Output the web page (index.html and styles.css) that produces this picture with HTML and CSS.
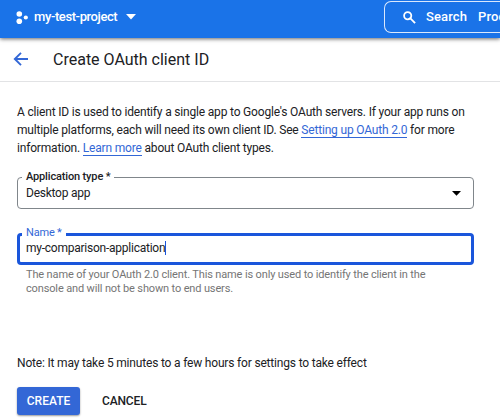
FILE: index.html
```html
<!DOCTYPE html>
<html lang="en">
<head>
<meta charset="utf-8">
<title>Create OAuth client ID</title>
<link rel="stylesheet" href="styles.css">
</head>
<body>
<header class="topbar">
  <div class="project">
    <svg class="project-icon" width="12" height="13" viewBox="0 0 12 13"><circle cx="3.3" cy="3" r="2.8"/><circle cx="3.3" cy="10.2" r="2.8"/><circle cx="9.8" cy="6.5" r="2.1"/></svg>
    <span class="project-name">my-test-project</span>
    <svg class="caret" width="10" height="6" viewBox="0 0 10 6"><path d="M0 0h10L5 5.6z"/></svg>
  </div>
  <div class="search">
    <svg class="search-icon" width="13" height="13" viewBox="0 0 13 13"><circle cx="4.7" cy="4.7" r="3.6"/><path d="M7.4 7.4l4.7 4.7"/></svg>
    <span class="search-label">Search</span>
    <span class="search-hint">Prod</span>
  </div>
</header>
<div class="titlebar">
  <svg class="back" width="15" height="14" viewBox="0 0 15 14"><path d="M15 7H2M8 .8L1.8 7 8 13.2"/></svg>
  <h1 class="title">Create OAuth client ID</h1>
</div>
<main class="content">
  <p class="intro">A client ID is used to identify a single app to Google's OAuth servers. If your app runs on<br>multiple platforms, each will need its own client ID. See <a class="link">Setting up OAuth 2.0</a> for more<br>information. <a class="link">Learn more</a> about OAuth client types.</p>
  <fieldset class="field">
    <legend class="legend type-label">Application type *</legend>
    <span class="type-value">Desktop app</span>
    <svg class="select-caret" width="9" height="5" viewBox="0 0 9 5"><path d="M0 0h9L4.5 4.8z"/></svg>
  </fieldset>
  <fieldset class="field focused">
    <legend class="legend name-label">Name *</legend>
    <span class="name-value">my-comparison-application</span><span class="cursor"></span>
  </fieldset>
  <p class="help">The name of your OAuth 2.0 client. This name is only used to identify the client in the<br>console and will not be shown to end users.</p>
  <p class="note">Note: It may take 5 minutes to a few hours for settings to take effect</p>
  <div class="actions">
    <button class="create">CREATE</button>
    <button class="cancel">CANCEL</button>
  </div>
</main>
</body>
</html>
```
FILE: styles.css
```css
* { box-sizing: border-box; }
body {
  margin: 0;
  height: 420px;
  overflow: hidden;
  background: #fff;
  color: #202124;
  font: 12px/18px Roboto, "Liberation Sans", sans-serif;
}
svg { display: block; flex: none; }
.topbar {
  position: relative;
  display: flex;
  justify-content: space-between;
  height: 38px;
  padding-left: 16px;
  background: #1a73e8;
  box-shadow: 0 1px 4px rgba(0,0,0,.6);
  color: #fff;
  white-space: nowrap;
}
.project { display: flex; align-items: center; height: 34px; }
.project-icon, .caret { fill: #fff; }
.project-name { margin: 0 9px 0 6px; font-size: 13px; font-weight: 500; letter-spacing: -.4px; }
.search {
  display: flex;
  align-items: center;
  width: 116px;
  height: 32px;
  margin-top: 1px;
  padding-left: 18px;
  overflow: hidden;
  border: 1px solid #dbe8fc;
  border-right: 0;
  border-radius: 7px 0 0 7px;
  font-size: 13px;
  font-weight: 500;
  letter-spacing: .12px;
}
.search-icon { fill: none; stroke: #fff; stroke-width: 1.8; }
.search-label { margin: 0 11px 0 10px; }
.titlebar {
  display: flex;
  align-items: center;
  height: 44px;
  padding: 0 0 1px 13px;
  border-bottom: 1px solid #e2e3e5;
}
.back { fill: none; stroke: #3367d6; stroke-width: 1.9; }
.title { margin: 2px 0 0 25px; font-size: 16px; font-weight: 400; }
.content { padding: 21px 26px 0 17px; }
.intro, .help, .note { margin: 0; letter-spacing: -.18px; white-space: nowrap; }
.link { color: #3367d6; border-bottom: 1px solid #3367d6; }
.field {
  display: flex;
  align-items: center;
  min-width: 0;
  height: 41px;
  margin: 11px 0 0;
  padding: 0 12px 8px 4px;
  border: 1px solid #80868b;
  border-radius: 4px;
}
.legend { height: 18px; padding: 0 4px; font-size: 11px; line-height: 17px; letter-spacing: -.15px; }
.type-label { font-weight: 500; }
.type-value, .name-value { padding-left: 4px; letter-spacing: -.24px; }
.select-caret { margin-left: auto; }
.focused { height: 40px; margin-top: 16px; padding: 0 11px 9px 2px; border: 3px solid #1a56db; }
.name-label { line-height: 15px; color: #3367d6; letter-spacing: -.2px; }
.cursor { width: 1px; height: 14px; background: #1a56db; }
.help { padding: 3px 0 0 9px; color: #757575; font-size: 11px; line-height: 14px; letter-spacing: -.14px; }
.note { margin-top: 58px; }
.actions { display: flex; margin-top: 15px; }
button { height: 28px; padding: 0; border: 0; font: 500 12px Roboto, "Liberation Sans", sans-serif; }
.create { width: 63px; border-radius: 3px; background: #3367d6; color: #fff; box-shadow: 0 1px 2px rgba(0,0,0,.4); }
.cancel { margin-left: 22px; background: none; color: #202124; letter-spacing: -.15px; }
```
